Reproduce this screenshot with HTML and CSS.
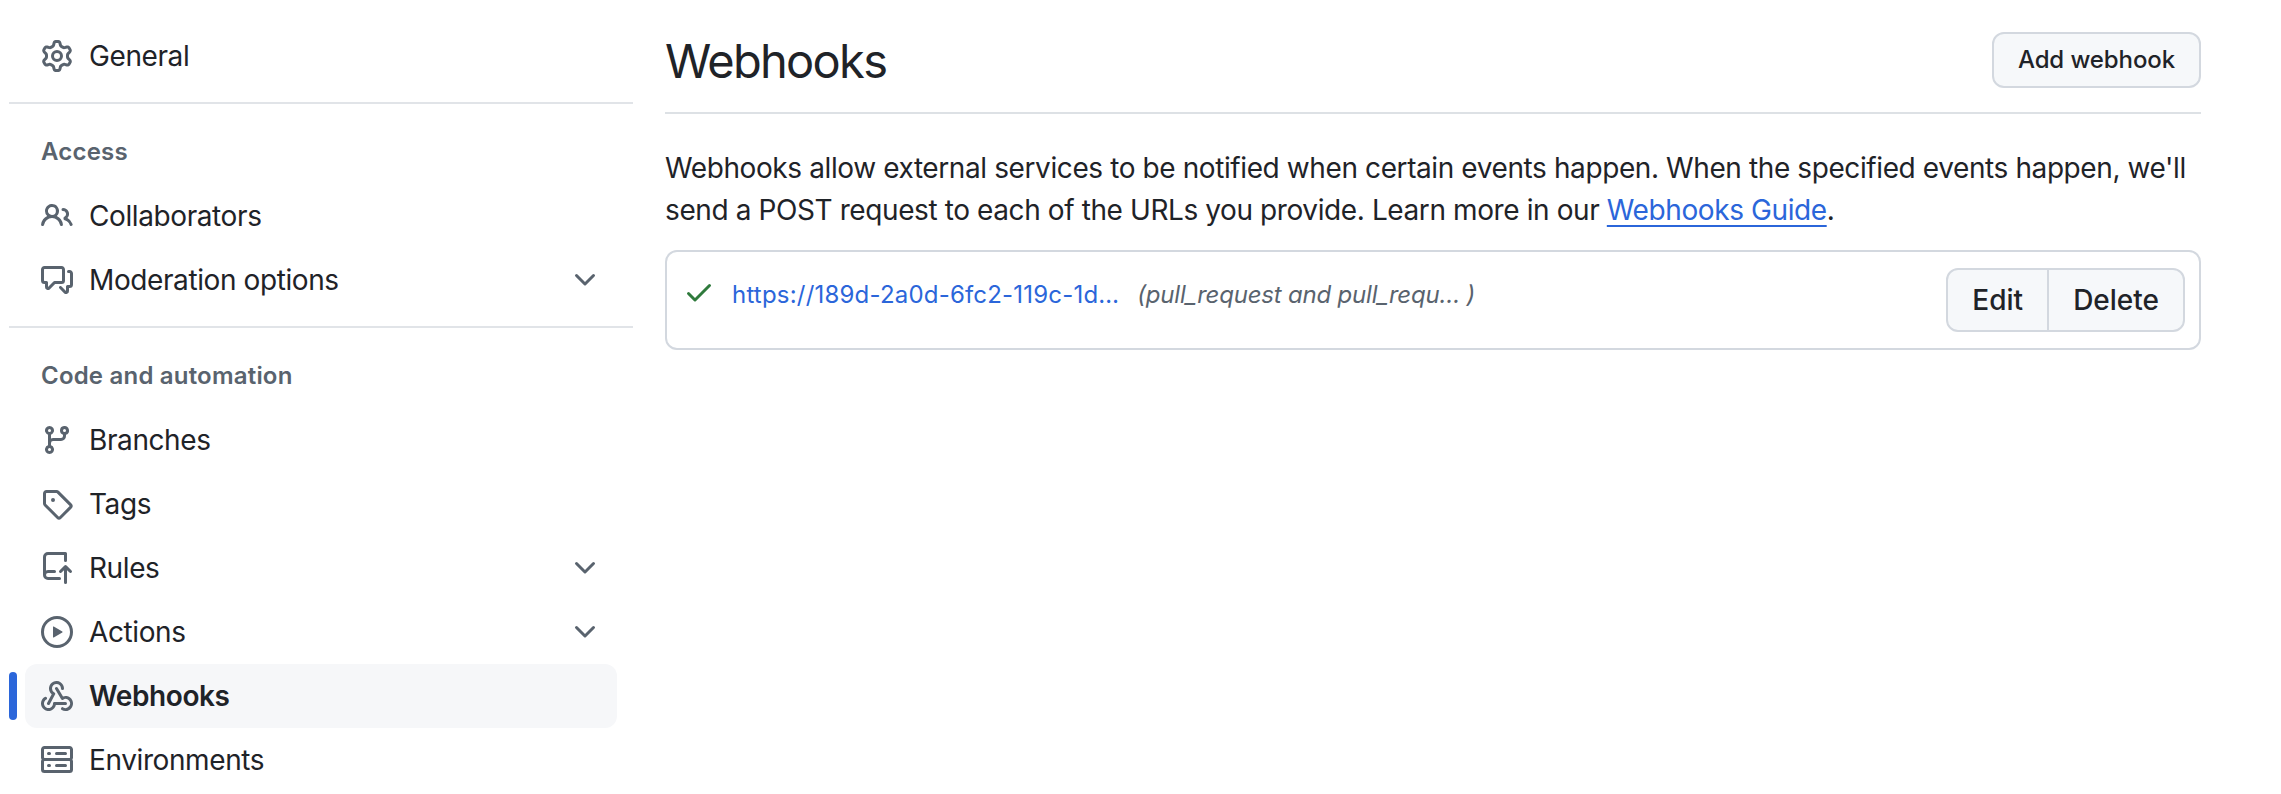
FILE: index.html
```html
<!DOCTYPE html>
<html lang="en">
<head>
    <meta charset="UTF-8" />
    <title>Webhooks</title>
    <link rel="stylesheet" href="styles.css">
</head>
<body>
    <div class="layout">
        <!-- Settings sidebar -->
        <nav class="sidebar">
            <ul class="nav-list">
                <li class="nav-item">
                    <svg class="icon" viewBox="0 0 16 16"><path d="M8 0a8.2 8.2 0 0 1 .701.031C9.444.095 9.99.645 10.16 1.29l.288 1.107c.018.066.079.158.212.224.231.114.454.243.668.386.123.082.233.09.299.071l1.103-.303c.644-.176 1.392.021 1.82.63.27.385.506.792.704 1.218.315.675.111 1.422-.364 1.891l-.814.806c-.049.048-.098.147-.088.294.016.257.016.515 0 .772-.01.147.038.246.088.294l.814.806c.475.469.679 1.216.364 1.891a7.977 7.977 0 0 1-.704 1.217c-.428.61-1.176.807-1.82.63l-1.102-.302c-.067-.019-.177-.011-.3.071a5.909 5.909 0 0 1-.668.386c-.133.066-.194.158-.211.224l-.29 1.106c-.168.646-.715 1.196-1.458 1.26a8.006 8.006 0 0 1-1.402 0c-.743-.064-1.289-.614-1.458-1.26l-.289-1.106c-.018-.066-.079-.158-.212-.224a5.738 5.738 0 0 1-.668-.386c-.123-.082-.233-.09-.299-.071l-1.103.303c-.644.176-1.392-.021-1.82-.63a8.12 8.12 0 0 1-.704-1.218c-.315-.675-.111-1.422.363-1.891l.815-.806c.05-.048.098-.147.088-.294a6.214 6.214 0 0 1 0-.772c.01-.147-.038-.246-.088-.294l-.815-.806C.635 6.045.431 5.298.746 4.623a7.92 7.92 0 0 1 .704-1.217c.428-.61 1.176-.807 1.82-.63l1.102.302c.067.019.177.011.3-.071.214-.143.437-.272.668-.386.133-.066.194-.158.211-.224l.29-1.106C6.009.645 6.556.095 7.299.03 7.53.01 7.764 0 8 0Zm-.571 1.525c-.036.003-.108.036-.137.146l-.289 1.105c-.147.561-.549.967-.998 1.189-.173.086-.34.183-.5.29-.417.278-.97.423-1.529.27l-1.103-.303c-.109-.03-.175.016-.195.045-.22.312-.412.644-.573.99-.014.031-.021.11.059.19l.815.806c.411.406.562.957.53 1.456a4.709 4.709 0 0 0 0 .582c.032.499-.119 1.05-.53 1.456l-.815.806c-.081.08-.073.159-.059.19.162.346.353.677.573.989.02.03.085.076.195.046l1.102-.303c.56-.153 1.113-.008 1.53.27.161.107.328.204.501.29.447.222.85.629.997 1.189l.289 1.105c.029.109.101.143.137.146a6.6 6.6 0 0 0 1.142 0c.036-.003.108-.036.137-.146l.289-1.105c.147-.561.549-.967.998-1.189.173-.086.34-.183.5-.29.417-.278.97-.423 1.529-.27l1.103.303c.109.029.175-.016.195-.045.22-.313.411-.644.573-.99.014-.031.021-.11-.059-.19l-.815-.806c-.411-.406-.562-.957-.53-1.456a4.709 4.709 0 0 0 0-.582c-.032-.499.119-1.05.53-1.456l.815-.806c.081-.08.073-.159.059-.19a6.464 6.464 0 0 0-.573-.989c-.02-.03-.085-.076-.195-.046l-1.102.303c-.56.153-1.113.008-1.53-.27a4.44 4.44 0 0 0-.501-.29c-.447-.222-.85-.629-.997-1.189l-.289-1.105c-.029-.11-.101-.143-.137-.146a6.6 6.6 0 0 0-1.142 0ZM11 8a3 3 0 1 1-6 0 3 3 0 0 1 6 0ZM9.5 8a1.5 1.5 0 1 0-3.001.001A1.5 1.5 0 0 0 9.5 8Z"/></svg>
                    <span class="nav-label">General</span>
                </li>
            </ul>

            <hr class="nav-divider" />

            <h3 class="nav-heading">Access</h3>
            <ul class="nav-list">
                <li class="nav-item">
                    <svg class="icon" viewBox="0 0 16 16"><path d="M2 5.5a3.5 3.5 0 1 1 5.898 2.549 5.508 5.508 0 0 1 3.034 4.084.75.75 0 1 1-1.482.235 4 4 0 0 0-7.9 0 .75.75 0 0 1-1.482-.236A5.507 5.507 0 0 1 3.102 8.05 3.493 3.493 0 0 1 2 5.5ZM11 4a3.001 3.001 0 0 1 2.22 5.018 5.01 5.01 0 0 1 2.56 3.012.749.749 0 0 1-.885.954.752.752 0 0 1-.549-.514 3.507 3.507 0 0 0-2.522-2.372.75.75 0 0 1-.574-.73v-.352a.75.75 0 0 1 .416-.672A1.5 1.5 0 0 0 11 5.5.75.75 0 0 1 11 4Zm-5.5-.5a2 2 0 1 0-.001 3.999A2 2 0 0 0 5.5 3.5Z"/></svg>
                    <span class="nav-label">Collaborators</span>
                </li>
                <li class="nav-item">
                    <svg class="icon" viewBox="0 0 16 16"><path d="M1.75 1h8.5c.966 0 1.75.784 1.75 1.75v5.5A1.75 1.75 0 0 1 10.25 10H7.061l-2.574 2.573A1.458 1.458 0 0 1 2 11.543V10h-.25A1.75 1.75 0 0 1 0 8.25v-5.5C0 1.784.784 1 1.75 1ZM1.5 2.75v5.5c0 .138.112.25.25.25h1a.75.75 0 0 1 .75.75v2.19l2.72-2.72a.749.749 0 0 1 .53-.22h3.5a.25.25 0 0 0 .25-.25v-5.5a.25.25 0 0 0-.25-.25h-8.5a.25.25 0 0 0-.25.25Zm13 2a.25.25 0 0 0-.25-.25h-.5a.75.75 0 0 1 0-1.5h.5c.966 0 1.75.784 1.75 1.75v5.5A1.75 1.75 0 0 1 14.25 12H14v1.543a1.458 1.458 0 0 1-2.487 1.03L9.22 12.28a.749.749 0 0 1 .326-1.275.749.749 0 0 1 .734.215l2.22 2.22v-2.19a.75.75 0 0 1 .75-.75h1a.25.25 0 0 0 .25-.25Z"/></svg>
                    <span class="nav-label">Moderation options</span>
                    <svg class="icon" viewBox="0 0 16 16"><path d="M12.78 5.22a.749.749 0 0 1 0 1.06l-4.25 4.25a.749.749 0 0 1-1.06 0L3.22 6.28a.749.749 0 1 1 1.06-1.06L8 8.939l3.72-3.719a.749.749 0 0 1 1.06 0Z"/></svg>
                </li>
            </ul>

            <hr class="nav-divider" />

            <h3 class="nav-heading">Code and automation</h3>
            <ul class="nav-list">
                <li class="nav-item">
                    <svg class="icon" viewBox="0 0 16 16"><path d="M9.5 3.25a2.25 2.25 0 1 1 3 2.122V6A2.5 2.5 0 0 1 10 8.5H6a1 1 0 0 0-1 1v1.128a2.251 2.251 0 1 1-1.5 0V5.372a2.25 2.25 0 1 1 1.5 0v1.836A2.493 2.493 0 0 1 6 7h4a1 1 0 0 0 1-1v-.628A2.25 2.25 0 0 1 9.5 3.25Zm-6 0a.75.75 0 1 0 1.5 0 .75.75 0 0 0-1.5 0Zm8.25-.75a.75.75 0 1 0 0 1.5.75.75 0 0 0 0-1.5ZM4.25 12a.75.75 0 1 0 0 1.5.75.75 0 0 0 0-1.5Z"/></svg>
                    <span class="nav-label">Branches</span>
                </li>
                <li class="nav-item">
                    <svg class="icon" viewBox="0 0 16 16"><path d="M1 7.775V2.75C1 1.784 1.784 1 2.75 1h5.025c.464 0 .91.184 1.238.513l6.25 6.25a1.75 1.75 0 0 1 0 2.474l-5.026 5.026a1.75 1.75 0 0 1-2.474 0l-6.25-6.25A1.752 1.752 0 0 1 1 7.775Zm1.5 0c0 .066.026.13.073.177l6.25 6.25a.25.25 0 0 0 .354 0l5.025-5.025a.25.25 0 0 0 0-.354l-6.25-6.25a.25.25 0 0 0-.177-.073H2.75a.25.25 0 0 0-.25.25ZM6 5a1 1 0 1 1 0 2 1 1 0 0 1 0-2Z"/></svg>
                    <span class="nav-label">Tags</span>
                </li>
                <li class="nav-item">
                    <svg class="icon" viewBox="0 0 16 16"><path d="M1 2.5A2.5 2.5 0 0 1 3.5 0h8.75a.75.75 0 0 1 .75.75v3.5a.75.75 0 0 1-1.5 0V1.5h-8a1 1 0 0 0-1 1v6.708A2.493 2.493 0 0 1 3.5 9h3.25a.75.75 0 0 1 0 1.5H3.5a1 1 0 0 0 0 2h5.75a.75.75 0 0 1 0 1.5H3.5A2.5 2.5 0 0 1 1 11.5Zm13.23 7.79h-.001l-1.224-1.224v6.184a.75.75 0 0 1-1.5 0V9.066L10.28 10.29a.75.75 0 0 1-1.06-1.061l2.505-2.504a.75.75 0 0 1 1.06 0L15.29 9.23a.751.751 0 0 1-.018 1.042.751.751 0 0 1-1.042.018Z"/></svg>
                    <span class="nav-label">Rules</span>
                    <svg class="icon" viewBox="0 0 16 16"><path d="M12.78 5.22a.749.749 0 0 1 0 1.06l-4.25 4.25a.749.749 0 0 1-1.06 0L3.22 6.28a.749.749 0 1 1 1.06-1.06L8 8.939l3.72-3.719a.749.749 0 0 1 1.06 0Z"/></svg>
                </li>
                <li class="nav-item">
                    <svg class="icon" viewBox="0 0 16 16"><path d="M8 0a8 8 0 1 1 0 16A8 8 0 0 1 8 0ZM1.5 8a6.5 6.5 0 1 0 13 0 6.5 6.5 0 0 0-13 0Zm4.879-2.773 4.264 2.559a.25.25 0 0 1 0 .428l-4.264 2.559A.25.25 0 0 1 6 10.559V5.442a.25.25 0 0 1 .379-.215Z"/></svg>
                    <span class="nav-label">Actions</span>
                    <svg class="icon" viewBox="0 0 16 16"><path d="M12.78 5.22a.749.749 0 0 1 0 1.06l-4.25 4.25a.749.749 0 0 1-1.06 0L3.22 6.28a.749.749 0 1 1 1.06-1.06L8 8.939l3.72-3.719a.749.749 0 0 1 1.06 0Z"/></svg>
                </li>
                <li class="nav-item active">
                    <svg class="icon" viewBox="0 0 16 16"><path d="M5.5 4.25a2.25 2.25 0 0 1 4.5 0 .75.75 0 0 0 1.5 0 3.75 3.75 0 1 0-6.14 2.889l-2.272 4.258a.75.75 0 0 0 1.324.706L7 7.25a.75.75 0 0 0-.309-1.015A2.25 2.25 0 0 1 5.5 4.25Z"/><path d="M7.364 3.607a.75.75 0 0 1 1.03.257l2.608 4.349a3.75 3.75 0 1 1-.628 6.785.75.75 0 0 1 .752-1.299 2.25 2.25 0 1 0-.033-3.88.75.75 0 0 1-1.03-.256L7.107 4.636a.75.75 0 0 1 .257-1.03Z"/><path d="M2.9 8.776A.75.75 0 0 1 2.625 9.8 2.25 2.25 0 1 0 6 11.75a.75.75 0 0 1 .75-.751h5.5a.75.75 0 0 1 0 1.5H7.425a3.751 3.751 0 1 1-5.55-3.998.75.75 0 0 1 1.024.274Z"/></svg>
                    <span class="nav-label">Webhooks</span>
                </li>
                <li class="nav-item">
                    <svg class="icon" viewBox="0 0 16 16"><path d="M1.75 1h12.5c.966 0 1.75.784 1.75 1.75v4c0 .372-.116.717-.314 1 .198.283.314.628.314 1v4a1.75 1.75 0 0 1-1.75 1.75H1.75A1.75 1.75 0 0 1 0 12.75v-4c0-.372.116-.717.314-1a1.739 1.739 0 0 1-.314-1v-4C0 1.784.784 1 1.75 1ZM1.5 2.75v4c0 .138.112.25.25.25h12.5a.25.25 0 0 0 .25-.25v-4a.25.25 0 0 0-.25-.25H1.75a.25.25 0 0 0-.25.25Zm.25 5.75a.25.25 0 0 0-.25.25v4c0 .138.112.25.25.25h12.5a.25.25 0 0 0 .25-.25v-4a.25.25 0 0 0-.25-.25ZM7 4.75A.75.75 0 0 1 7.75 4h4.5a.75.75 0 0 1 0 1.5h-4.5A.75.75 0 0 1 7 4.75ZM7.75 10h4.5a.75.75 0 0 1 0 1.5h-4.5a.75.75 0 0 1 0-1.5ZM3 4.75A.75.75 0 0 1 3.75 4h.5a.75.75 0 0 1 0 1.5h-.5A.75.75 0 0 1 3 4.75ZM3.75 10h.5a.75.75 0 0 1 0 1.5h-.5a.75.75 0 0 1 0-1.5Z"/></svg>
                    <span class="nav-label">Environments</span>
                </li>
            </ul>
        </nav>

        <!-- Main content -->
        <main class="content">
            <header class="page-head">
                <h2 class="page-title">Webhooks</h2>
                <a class="btn btn-add">Add webhook</a>
            </header>

            <p class="intro">Webhooks allow external services to be notified when certain events happen. When the specified events happen, we'll send a POST request to each of the URLs you provide. Learn more in our <a class="guide-link">Webhooks Guide</a>.</p>

            <div class="hook-card">
                <svg class="icon icon-ok" viewBox="0 0 16 16"><path d="M13.78 4.22a.75.75 0 0 1 0 1.06l-7.25 7.25a.75.75 0 0 1-1.06 0L2.22 9.28a.751.751 0 0 1 .018-1.042.751.751 0 0 1 1.042-.018L6 10.94l6.72-6.72a.75.75 0 0 1 1.06 0Z"/></svg>
                <a class="hook-url">https://189d-2a0d-6fc2-119c-1d…</a>
                <span class="hook-events">(pull_request and pull_requ… )</span>
                <div class="btn-group">
                    <a class="btn btn-part">Edit</a>
                    <a class="btn btn-part">Delete</a>
                </div>
            </div>
        </main>
    </div>
</body>
</html>
```

FILE: styles.css
```css
/* Page */
body {
    margin: 0;
    font-family: 'Inter', 'Liberation Sans', sans-serif;
    font-size: 28px;
    line-height: 42px;
    letter-spacing: -0.4px;
    color: #1f2328;
    background: #fff;
}

.layout {
    display: flex;
    gap: 32px;
    padding: 24px 80px 0 9px;
}

.icon {
    width: 32px;
    height: 32px;
    flex: none;
    fill: #59636e;
}

/* Sidebar */
.sidebar {
    width: 624px;
    flex: none;
}

.nav-list {
    list-style: none;
    margin: 0;
    padding: 0 16px;
}

.nav-item {
    position: relative;
    display: flex;
    align-items: center;
    gap: 16px;
    height: 64px;
    padding: 0 16px;
    border-radius: 12px;
}

.nav-label {
    flex: 1;
}

.nav-item.active {
    background: #f6f7f9;
    font-weight: 600;
}

/* blue marker beside the selected row */
.nav-item.active::before {
    content: "";
    position: absolute;
    left: -16px;
    top: 8px;
    bottom: 8px;
    width: 8px;
    border-radius: 4px;
    background: #2b66da;
}

.nav-divider {
    height: 2px;
    margin: 14px 0 0;
    border: 0;
    background: #e1e4e8;
}

.nav-heading {
    margin: 0;
    padding: 30px 32px 14px;
    font-size: 24px;
    line-height: 36px;
    font-weight: 600;
    letter-spacing: 0.2px;
    color: #59636e;
}

/* Main content */
.content {
    flex: 1;
    min-width: 0;
}

.page-head {
    display: flex;
    justify-content: space-between;
    align-items: flex-start;
    padding: 8px 0 24px;
    border-bottom: 2px solid #dde1e5;
}

.page-title {
    margin: 2px 0 0;
    font-size: 47px;
    line-height: 54px;
    font-weight: 400;
    letter-spacing: -1.7px;
}

.btn {
    display: block;
    background: #f6f8fa;
    border: 2px solid #d3d8df;
    color: #1f2328;
    font-weight: 500;
    letter-spacing: 0;
    box-sizing: border-box;
}

.btn-add {
    height: 56px;
    padding: 0 24px;
    border-radius: 12px;
    font-size: 24px;
    line-height: 52px;
    letter-spacing: -0.1px;
}

.intro {
    margin: 33px 0 0;
}

.guide-link {
    color: #2b66da;
    text-decoration: underline;
    text-underline-offset: 5px;
    text-decoration-thickness: 2px;
}

/* Webhook row */
.hook-card {
    display: flex;
    align-items: flex-start;
    gap: 16px;
    height: 100px;
    box-sizing: border-box;
    margin-top: 19px;
    padding: 16px 14px 16px 16px;
    border: 2px solid #d3d8df;
    border-radius: 12px;
}

.icon-ok {
    margin-top: 8px;
    fill: #2f7a3c;
}

.hook-url {
    margin: 9px 0 0 1px;
    font-size: 24px;
    line-height: 36px;
    letter-spacing: 0.2px;
    color: #2b66da;
}

.hook-events {
    flex: 1;
    margin: 9px 0 0 2px;
    font-size: 24px;
    line-height: 36px;
    font-style: italic;
    letter-spacing: -0.2px;
    color: #59636e;
}

.btn-group {
    display: flex;
}

.btn-part {
    height: 64px;
    padding: 0 24px;
    line-height: 60px;
}

.btn-part:first-child {
    border-radius: 12px 0 0 12px;
}

.btn-part:last-child {
    margin-left: -2px;
    border-radius: 0 12px 12px 0;
}
```
